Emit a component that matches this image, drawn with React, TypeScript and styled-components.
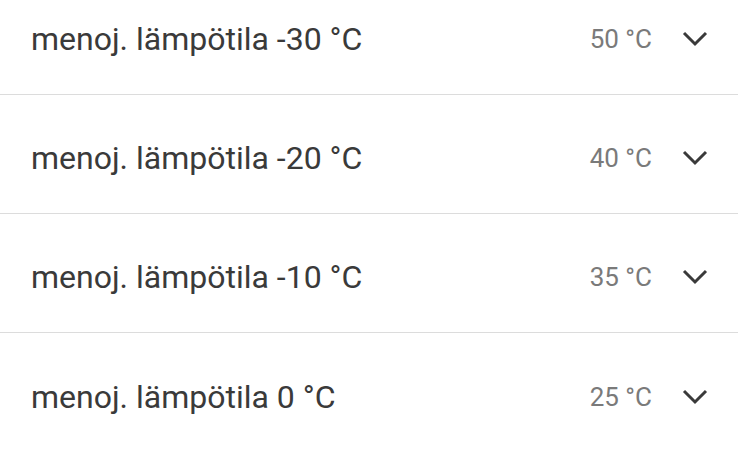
import React from "react";
import styled, { createGlobalStyle } from "styled-components";

const Global = createGlobalStyle`
  html, body { margin: 0; padding: 0; background: #ffffff; }
  body { font-family: Roboto, "Noto Sans", sans-serif; }
`;

const Viewport = styled.div`
  width: 738px;
  height: 450px;
  overflow: hidden;
  background: #ffffff;
`;

const List = styled.ul`
  list-style: none;
  margin: -24px 0 0 0;
  padding: 0;
`;

const Row = styled.li<{ $last?: boolean }>`
  display: flex;
  align-items: center;
  height: 119px;
  padding: 8px 30px 0 31px;
  box-sizing: border-box;
  border-bottom: ${(p) => (p.$last ? "none" : "1px solid #dcdcdc")};
`;

const Label = styled.span`
  flex: 1;
  font-size: 32px;
  color: #3a3a3a;
`;

const Value = styled.span`
  font-size: 26px;
  color: #7a7a7a;
  margin-right: 30px;
`;

const Chevron = styled.svg`
  width: 26px;
  height: 16px;
  display: block;
`;

const rows = [
  { label: "menoj. lämpötila -30 °C", value: "50 °C" },
  { label: "menoj. lämpötila -20 °C", value: "40 °C" },
  { label: "menoj. lämpötila -10 °C", value: "35 °C" },
  { label: "menoj. lämpötila 0 °C", value: "25 °C" },
];

export default function App() {
  return (
    <Viewport>
      <Global />
      <List>
        {rows.map((r, i) => (
          <Row key={r.label} $last={i === rows.length - 1}>
            <Label>{r.label}</Label>
            <Value>{r.value}</Value>
            <Chevron viewBox="0 0 26 16" aria-hidden="true">
              <path
                d="M2 2 L13 13 L24 2"
                fill="none"
                stroke="#3a3a3a"
                strokeWidth="3"
              />
            </Chevron>
          </Row>
        ))}
      </List>
    </Viewport>
  );
}
